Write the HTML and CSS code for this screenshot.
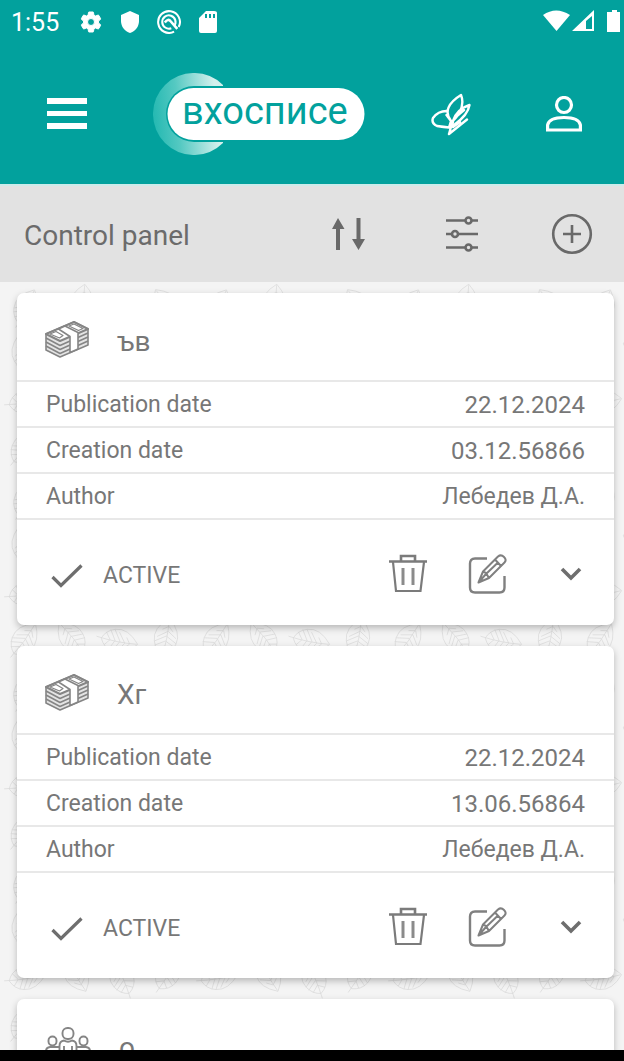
FILE: index.html
```html
<!DOCTYPE html>
<html lang="en">
<head>
<meta charset="utf-8">
<meta name="viewport" content="width=device-width, initial-scale=1">
<title>Control panel</title>
<link rel="stylesheet" href="styles.css">
</head>
<body>
<svg class="defs" aria-hidden="true">
  <defs>
    <symbol id="money" viewBox="0 0 44 38">
      <g fill="none" stroke="#858585" stroke-width="1.6" stroke-linejoin="round">
        <path fill="#e4e4e4" d="M1 13 29 1 43 8 43 24 15 36 1 29Z"/>
        <path fill="#fff" stroke-width="2" d="M1 13 29 1 43 8 15 20Z"/>
        <path d="M1 17 15 24.500 43 12M1 21 15 28.500 43 16M1 25 15 32.500 43 20"/>
        <path stroke-width="1.200" d="M5 13 11 10.500 18 14.500 14.500 17ZM24 5 29 3 38 7.500 33.500 9.500Z"/>
        <path fill="#fff" d="M13.500 8 20 5 33 11.500V28L25 31.500V15.500Z"/>
      </g>
    </symbol>
    <symbol id="people" viewBox="0 0 46 38">
      <g fill="none" stroke="#858585" stroke-width="1.900">
        <rect x="17.500" y="1" width="11" height="11" rx="5"/>
        <rect x="3.500" y="9.500" width="8" height="9" rx="4"/>
        <rect x="34.500" y="9.500" width="8" height="9" rx="4"/>
        <path d="M14.500 37V19Q14.500 14 19 13.500Q23 16 27 13.500Q31.500 14 31.500 19V37M19 19V37M27 19V37M1 37V24Q1 20.500 5 20H14M45 37V24Q45 20.500 41 20H32"/>
      </g>
    </symbol>
    <symbol id="check" viewBox="0 0 32 24"><path d="M1.500 13 10 21.500 30.500 1.500" fill="none" stroke="#6e6e6e" stroke-width="3.200"/></symbol>
    <symbol id="trash" viewBox="0 0 40 40">
      <g fill="none" stroke="#7b7b7b" stroke-width="2.200"><path stroke-width="2.600" d="M1 7.500H39M13 7V2H27V7"/><path d="M5 8 8 37H32.500L36 8"/><path d="M15 14V31M25 14V31" stroke="#8b8b8b" stroke-width="3"/></g>
    </symbol>
    <symbol id="edit" viewBox="0 0 40 40">
      <g fill="none" stroke="#808080" stroke-width="2.400" stroke-linejoin="round">
        <path d="M19 4.500H7Q2 4.500 2 9.500V33.500Q2 38.500 7 38.500H31.500Q36.500 38.500 36.500 33.500V22"/>
        <path stroke-width="2" d="M10.500 28.500 15 17.500 30 2.500Q33 0 36 3T36.500 8.500L21 24ZM15 17.500 18 19 21 24M27 5.500 33 12M18 20 30.500 8M10.500 28.500 18 20"/>
      </g>
    </symbol>
    <symbol id="chevron" viewBox="0 0 22 14"><path d="M2 2 11 11 20 2" fill="none" stroke="#6e6e6e" stroke-width="3.600"/></symbol>
    <path id="leaf" fill="none" stroke="#dadada" stroke-width="0.700" d="M0-20Q-15-8-11 5Q-8 14 0 17Q9 13 11 4Q14-8 0-20ZM0-19Q2 0-1 22M1-12-5-8M1-7-9 0M0-2-11 5M0 3-10 9M0 8-7 13M1-12 6-7M1-7 10-1M0-2 11 4M0 3 10 8M0 8 6 13"/>
    <pattern id="foliage" width="192" height="192" patternUnits="userSpaceOnUse">
      <use href="#leaf" transform="translate(26 26) rotate(25)"/>
      <use href="#leaf" transform="translate(82 22) rotate(8)"/>
      <use href="#leaf" transform="translate(124 28) rotate(75)"/>
      <use href="#leaf" transform="translate(167 24) rotate(-35)"/>
      <use href="#leaf" transform="translate(24 72) rotate(-15)"/>
      <use href="#leaf" transform="translate(66 68) rotate(-70)"/>
      <use href="#leaf" transform="translate(112 74) rotate(35)"/>
      <use href="#leaf" transform="translate(160 70) rotate(140)"/>
      <use href="#leaf" transform="translate(26 120) rotate(80)"/>
      <use href="#leaf" transform="translate(76 116) rotate(150)"/>
      <use href="#leaf" transform="translate(122 120) rotate(-25)"/>
      <use href="#leaf" transform="translate(168 116) rotate(30)"/>
      <use href="#leaf" transform="translate(24 166) rotate(35)"/>
      <use href="#leaf" transform="translate(72 164) rotate(-40)"/>
      <use href="#leaf" transform="translate(118 167) rotate(100)"/>
      <use href="#leaf" transform="translate(166 164) rotate(10)"/>
    </pattern>
  </defs>
</svg>

<header class="app-header">
  <div class="status">
    <span class="clock">1:55</span>
    <svg class="status-icon" viewBox="0 0 24 24" fill="#fff"><path d="M19.430 12.980c.04-.32.07-.64.07-.98s-.03-.66-.07-.98l2.110-1.650c.19-.15.24-.42.12-.64l-2-3.460c-.12-.22-.39-.3-.61-.22l-2.490 1c-.52-.4-1.080-.73-1.690-.98l-.38-2.650C14.460 2.180 14.250 2 14 2h-4c-.25 0-.46.18-.49.42l-.38 2.650c-.61.25-1.170.59-1.690.98l-2.490-1c-.23-.09-.49 0-.61.22l-2 3.460c-.13.22-.07.49.12.64l2.110 1.650c-.04.32-.07.65-.07.98s.03.66.07.98l-2.110 1.650c-.19.15-.24.42-.12.64l2 3.460c.12.22.39.3.61.22l2.490-1c.52.4 1.080.73 1.690.98l.38 2.650c.03.24.24.42.49.42h4c.25 0 .46-.18.49-.42l.38-2.650c.61-.25 1.170-.59 1.690-.98l2.490 1c.23.09.49 0 .61-.22l2-3.460c.12-.22.07-.49-.12-.64zM12 15.500a3.500 3.500 0 1 1 0-7 3.500 3.500 0 0 1 0 7z" stroke="#fff" stroke-width="1"/></svg>
    <svg class="status-icon" viewBox="0 0 24 24" fill="#fff"><path d="M12 1 3 5v6c0 5.550 3.840 10.740 9 12 5.160-1.260 9-6.450 9-12V5z"/></svg>
    <svg class="status-icon" viewBox="0 0 26 26" fill="none" stroke="#fff" stroke-width="2.200"><path d="M18.500 23.500A11.800 11.800 0 1 1 23.500 18.500"/><path d="M18.500 17.500A7.200 7.200 0 1 0 15.500 19.700"/><path d="M8.500 13.500Q12 8.500 15 12.500L22 20.500" stroke-width="2.800"/></svg>
    <svg class="status-icon" viewBox="0 0 24 24" fill="#fff"><path d="M18 1H10L3 8v13q0 2 2 2h14q2 0 2-2V3q0-2-3-2zM11 8H9V4h2zm4 0h-2V4h2zm4 0h-2V4h2z"/></svg>
    <svg class="network" viewBox="0 0 80 26" fill="#fff"><path d="M0 6Q13-3 27 6L13.500 22Z"/><path fill-rule="evenodd" d="M29 22 51 1V22ZM43 12V20H49V7Z"/><path d="M66 3H69V1H74V3H77V23H64V3Z"/></svg>
  </div>
  <div class="brand-bar">
    <button class="icon-button menu" aria-label="Menu"><svg width="40" height="32" viewBox="0 0 40 32" fill="#fff"><path d="M0 0H40V6H0ZM0 13H40V18H0ZM0 25H40V31H0Z"/></svg></button>
    <a class="logo" href="#" aria-label="вхосписе">
      <svg width="212" height="82" viewBox="0 0 212 82">
        <defs><linearGradient id="moon" x1="0" x2="1" y1="0.500" y2="0.400"><stop offset="0" stop-color="#25b9b2"/><stop offset="0.350" stop-color="#55c9c2"/><stop offset="0.900" stop-color="#d3f0ed"/></linearGradient></defs>
        <path fill="url(#moon)" d="M70 12A41 41 0 1 0 70 70Z"/>
        <rect x="13" y="13" width="199" height="56" rx="28" fill="#02a19d"/>
        <rect x="14.500" y="15" width="197" height="52" rx="26" fill="#fff"/>
        <text class="logo-text" x="29" y="51">вхосписе</text>
      </svg>
    </a>
    <button class="icon-button butterfly" aria-label="Quotes"><svg width="40" height="43" viewBox="0 0 40 43" fill="none" stroke="#fff" stroke-width="2.400" stroke-linejoin="round" stroke-linecap="round"><path d="M20 28C13 19 17 10 30 2C34 12 29 21 21 29M15.500 18Q7 18 2 25Q0 30 6 33Q13 34 18 34.500L20 28L15.500 22M22 28Q26 16 38.500 12Q37 22 23 32M26 23 33 17M18 41 20 34 22 29M18 41 23 37 36 26.500M22 34 29 29"/></svg></button>
    <button class="icon-button" aria-label="Profile"><svg width="36" height="36" viewBox="0 0 36 36" fill="none" stroke="#fff" stroke-width="3.200"><circle cx="18" cy="9" r="7.500"/><path d="M1.600 34V29Q3 21.500 18 21.500T34.400 29V34Z"/></svg></button>
  </div>
</header>

<div class="toolbar">
  <h1>Control panel</h1>
  <button class="icon-button" aria-label="Sort"><svg width="33" height="34" viewBox="0 0 33 34" fill="#696969"><path d="M6 1 12.500 12H8V33H4V12H0ZM24.500 1H28.500V22H33L26.500 33 20 22H24.500Z"/></svg></button>
  <button class="icon-button" aria-label="Filter"><svg width="34" height="36" viewBox="0 0 34 36" fill="none" stroke="#696969" stroke-width="2.600"><path d="M1 4.500H20M27 4.500H33M1 18H7M13 18H33M1 31.500H20M27 31.500H33"/><circle cx="23.500" cy="4.500" r="3"/><circle cx="10" cy="18" r="3"/><circle cx="23.500" cy="31.500" r="3"/></svg></button>
  <button class="icon-button" aria-label="Add"><svg width="42" height="42" viewBox="0 0 42 42" fill="none" stroke="#696969" stroke-width="2.600"><circle cx="21" cy="21" r="18.800"/><path d="M12 21H30M21 12V30"/></svg></button>
</div>

<main class="feed">
  <svg class="foliage" aria-hidden="true"><rect width="100%" height="100%" fill="url(#foliage)"/></svg>
  <div class="cards">
    <article class="card">
      <header class="card-head"><svg width="44" height="38"><use href="#money"/></svg><h2>ъв</h2></header>
      <table>
        <tr><th scope="row">Publication date</th><td class="date">22.12.2024</td></tr>
        <tr><th scope="row">Creation date</th><td class="date">03.12.56866</td></tr>
        <tr><th scope="row">Author</th><td>Лебедев Д.А.</td></tr>
      </table>
      <footer class="card-foot">
        <span class="state"><svg width="32" height="24"><use href="#check"/></svg>ACTIVE</span>
        <button class="icon-button" aria-label="Delete"><svg width="40" height="40"><use href="#trash"/></svg></button>
        <button class="icon-button" aria-label="Edit"><svg width="40" height="40"><use href="#edit"/></svg></button>
        <button class="icon-button expand" aria-label="Expand"><svg width="22" height="14"><use href="#chevron"/></svg></button>
      </footer>
    </article>
    <article class="card">
      <header class="card-head"><svg width="44" height="38"><use href="#money"/></svg><h2>Хг</h2></header>
      <table>
        <tr><th scope="row">Publication date</th><td class="date">22.12.2024</td></tr>
        <tr><th scope="row">Creation date</th><td class="date">13.06.56864</td></tr>
        <tr><th scope="row">Author</th><td>Лебедев Д.А.</td></tr>
      </table>
      <footer class="card-foot">
        <span class="state"><svg width="32" height="24"><use href="#check"/></svg>ACTIVE</span>
        <button class="icon-button" aria-label="Delete"><svg width="40" height="40"><use href="#trash"/></svg></button>
        <button class="icon-button" aria-label="Edit"><svg width="40" height="40"><use href="#edit"/></svg></button>
        <button class="icon-button expand" aria-label="Expand"><svg width="22" height="14"><use href="#chevron"/></svg></button>
      </footer>
    </article>
    <article class="card">
      <header class="card-head"><svg width="46" height="38"><use href="#people"/></svg><h2>о</h2></header>
    </article>
  </div>
</main>
<div class="system-nav"></div>
</body>
</html>
```
FILE: styles.css
```css
* {
  box-sizing: border-box;
}

body {
  margin: 0;
  height: 100vh;
  display: flex;
  flex-direction: column;
  font-family: Roboto, "Liberation Sans", sans-serif;
  color: #777;
  background: #f4f4f4;
}

svg {
  display: block;
  flex: none;
}

h1,
h2 {
  margin: 0;
  font-weight: 400;
  font-size: 28px;
  line-height: 32px;
}

.defs {
  position: absolute;
  width: 0;
  height: 0;
}

.icon-button {
  padding: 0;
  border: 0;
  background: none;
  cursor: pointer;
}

.app-header {
  flex: none;
  background: #02a19d;
  border-bottom: 2px solid #cdebea;
}

.status {
  display: flex;
  align-items: center;
  gap: 15px;
  height: 44px;
  padding: 0 3px 0 11px;
  color: #fff;
}

.clock {
  margin-right: 5px;
  padding-top: 2px;
  font-size: 25px;
  line-height: 30px;
}

.status-icon {
  width: 24px;
  height: 24px;
}

.network {
  width: 80px;
  height: 26px;
  margin-left: auto;
  margin-right: -2px;
}

.brand-bar {
  display: flex;
  align-items: center;
  height: 140px;
  padding: 0 42px 0 47px;
}

.logo {
  margin: 0 auto 0 66px;
}

.logo-text {
  font-size: 38px;
  fill: #02a19d;
}

.butterfly {
  margin-right: 75px;
}

.toolbar {
  flex: none;
  display: flex;
  align-items: center;
  height: 96px;
  padding: 0 31px 0 24px;
  gap: 72px;
  background: #e2e2e2;
  color: #6b6b6b;
}

.toolbar h1 {
  flex: 1;
  padding-top: 3px;
}

.toolbar .icon-button:nth-child(3) {
  margin-left: 8px;
}

.feed {
  position: relative;
  flex: 1;
  min-height: 0;
  overflow: hidden;
}

.foliage {
  position: absolute;
  inset: 0;
  width: 100%;
  height: 100%;
}

.cards {
  position: relative;
  display: flex;
  flex-direction: column;
  gap: 21px;
  height: 100%;
  padding: 11px 10px 21px 17px;
  overflow-y: auto;
  scrollbar-width: none;
}

.card {
  flex: none;
  background: #fff;
  border-radius: 7px;
  box-shadow: 0 3px 7px rgba(0, 0, 0, 0.25);
}

.card-head {
  display: flex;
  align-items: center;
  gap: 28px;
  height: 87px;
  padding: 6px 28px 0;
}

.card-head h2 {
  padding-top: 4px;
}

.card table {
  width: 100%;
  border-collapse: collapse;
  border-bottom: 2px solid #e8e8e8;
  font-size: 23px;
  line-height: 28px;
}

.card th,
.card td {
  height: 46px;
  padding: 2px 29px 0;
  border-top: 2px solid #e8e8e8;
  font-weight: 400;
  text-align: left;
}

.card td {
  text-align: right;
}

.card .date {
  font-size: 24px;
}

.card-foot {
  display: flex;
  align-items: center;
  gap: 40px;
  height: 105px;
  padding: 2px 32px 0 34px;
}

.state {
  flex: 1;
  display: flex;
  align-items: center;
  gap: 20px;
  padding-top: 4px;
  font-size: 23px;
  line-height: 28px;
}

.expand {
  margin-left: 12px;
}

.system-nav {
  flex: none;
  height: 11px;
  background: #000;
}
```
